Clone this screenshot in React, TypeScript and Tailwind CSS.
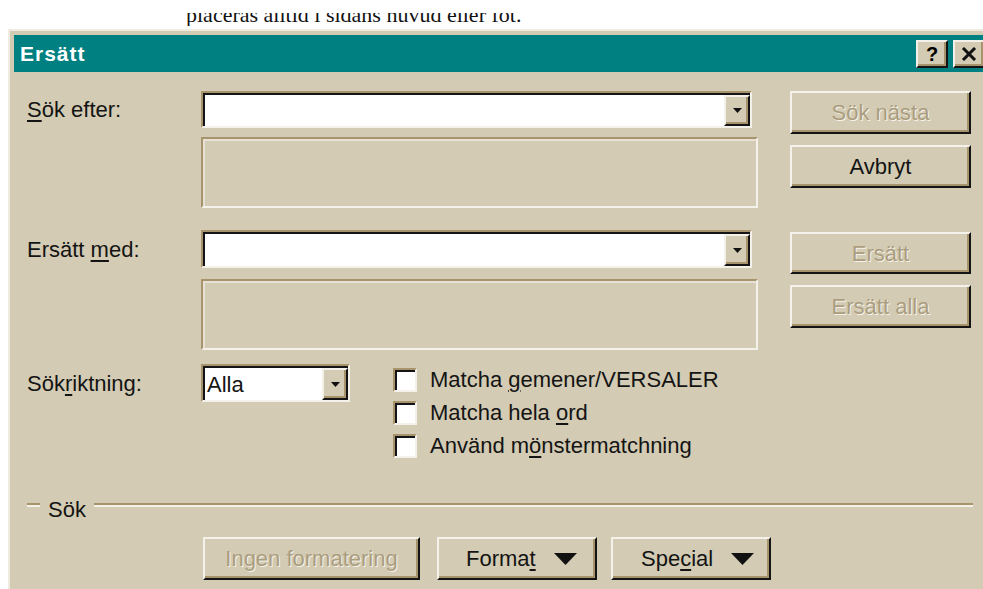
import type { ReactNode } from "react"

const raised =
  "border-2 border-t-[#f4f1ea] border-l-[#f4f1ea] border-r-[#141414] border-b-[#141414] bg-[#d3cbb3] shadow-[inset_-2px_-2px_0_#a8946c]"
const sunken =
  "border-2 border-t-[#a8946c] border-l-[#a8946c] border-r-[#f4f1ea] border-b-[#f4f1ea]"

function Btn({ children, disabled, className = "" }: { children: ReactNode; disabled?: boolean; className?: string }) {
  return (
    <div
      className={`${raised} flex items-center justify-center text-[22px] ${
        disabled ? "text-[#ab9d7f] [text-shadow:1px_1px_0_#f5f2ea]" : "text-[#141414]"
      } ${className}`}
    >
      {children}
    </div>
  )
}

function Arrow({ w = 9, h = 5 }: { w?: number; h?: number }) {
  return (
    <svg width={w} height={h} viewBox={`0 0 ${w} ${h}`}>
      <polygon points={`0,0 ${w},0 ${w / 2},${h}`} fill="#111" />
    </svg>
  )
}

function Combo({ value, className = "" }: { value?: string; className?: string }) {
  return (
    <div className={`${sunken} bg-white shadow-[inset_2px_2px_0_#141414] pt-[2px] pl-[2px] flex ${className}`}>
      <div className="flex-1 flex items-center pl-[2px] text-[22px] text-[#141414]">{value}</div>
      <div className={`${raised} w-[26px] flex items-center justify-center`}>
        <Arrow />
      </div>
    </div>
  )
}

function Well({ className = "" }: { className?: string }) {
  return <div className={`${sunken} shadow-[inset_2px_2px_0_#e6e1d4] ${className}`} />
}

function Check({ children }: { children: ReactNode }) {
  return (
    <div className="flex items-center h-[33px] gap-[13px]">
      <div className={`${sunken} w-[24px] h-[24px] bg-white shadow-[inset_2px_2px_0_#141414]`} />
      <span className="text-[22px] text-[#141414]">{children}</span>
    </div>
  )
}

const u = "underline underline-offset-[3px] decoration-[2px]"

export default function App() {
  return (
    <div className="w-[983px] h-[589px] overflow-hidden bg-white font-['Liberation_Sans',Arial,sans-serif]">
      {/* document text behind the dialog, cut by the top of the window */}
      <div className="h-[29px] pl-[186px] pt-[13px]">
        <div className="h-[13px] overflow-hidden">
          <div className="-mt-[9px] text-[22px] leading-[22px] text-[#111] font-['Liberation_Serif',serif] whitespace-nowrap">
            placeras alltid i sidans huvud eller fot.
          </div>
        </div>
      </div>

      <div className="ml-[8px] w-[1000px] h-[600px] bg-[#d3cbb3] border-t-2 border-l-2 border-[#efebe1] pt-[4px] pl-[4px]">
        {/* title bar */}
        <div className="w-[975px] h-[37px] bg-[#008080] flex items-center justify-between pl-[6px] pr-[4px]">
          <span className="text-white font-bold text-[21px] tracking-[1px]">Ersätt</span>
          <div className="flex gap-[5px]">
            <div className={`${raised} w-[32px] h-[28px] flex items-center justify-center text-[20px] font-bold leading-none`}>?</div>
            <div className={`${raised} w-[32px] h-[28px] flex items-center justify-center`}>
              <svg width="16" height="14" viewBox="0 0 16 14">
                <path d="M2 1 L14 13 M14 1 L2 13" stroke="#111" strokeWidth="3" />
              </svg>
            </div>
          </div>
        </div>

        <div className="pl-[13px] pt-[19px] text-[22px] text-[#141414]">
          {/* find */}
          <div className="flex">
            <div className="w-[174px] h-[37px] flex items-center">
              <span><span className={u}>S</span>ök efter:</span>
            </div>
            <div className="w-[557px]">
              <Combo className="w-[551px] h-[37px]" />
              <Well className="mt-[9px] h-[71px]" />
            </div>
            <div className="ml-[32px] w-[181px]">
              <Btn disabled className="h-[43px]">Sök nästa</Btn>
              <Btn className="mt-[11px] h-[43px]">Avbryt</Btn>
            </div>
          </div>

          {/* replace */}
          <div className="flex mt-[22px]">
            <div className="w-[174px] h-[38px] flex items-center">
              <span>Ersätt <span className={u}>m</span>ed:</span>
            </div>
            <div className="w-[557px]">
              <Combo className="w-[551px] h-[38px]" />
              <Well className="mt-[11px] h-[71px]" />
            </div>
            <div className="ml-[32px] w-[181px] pt-[2px]">
              <Btn disabled className="h-[42px]">Ersätt</Btn>
              <Btn disabled className="mt-[11px] h-[43px]">Ersätt alla</Btn>
            </div>
          </div>

          {/* direction and options */}
          <div className="flex mt-[14px]">
            <div className="w-[174px] h-[38px] flex items-center">
              <span>Sök<span className={u}>r</span>iktning:</span>
            </div>
            <Combo value="Alla" className="w-[149px] h-[38px]" />
            <div className="ml-[43px] pt-[2px] -mt-[3px]">
              <Check>Matcha <span className={u}>g</span>emener/VERSALER</Check>
              <Check>Matcha hela <span className={u}>o</span>rd</Check>
              <Check>Använd m<span className={u}>ö</span>nstermatchning</Check>
            </div>
          </div>

          {/* search group separator */}
          <div className="mt-[31px] w-[946px] h-[24px] flex items-center">
            <div className="w-[13px] h-[4px] border-t-2 border-b-2 border-t-[#a8946c] border-b-[#f4f1ea]" />
            <span className="px-[8px] translate-y-[4px]">Sök</span>
            <div className="flex-1 h-[4px] border-t-2 border-b-2 border-t-[#a8946c] border-b-[#f4f1ea]" />
          </div>

          <div className="mt-[20px] ml-[176px] flex">
            <Btn disabled className="w-[217px] h-[43px]">Ingen formatering</Btn>
            <Btn className="ml-[17px] w-[160px] h-[43px] !justify-start pl-[27px] gap-[18px]">
              <span>Forma<span className={u}>t</span></span>
              <Arrow w={23} h={12} />
            </Btn>
            <Btn className="ml-[14px] w-[160px] h-[43px] !justify-start pl-[28px] gap-[18px]">
              <span>Spe<span className={u}>c</span>ial</span>
              <Arrow w={23} h={12} />
            </Btn>
          </div>
        </div>
      </div>
    </div>
  )
}
